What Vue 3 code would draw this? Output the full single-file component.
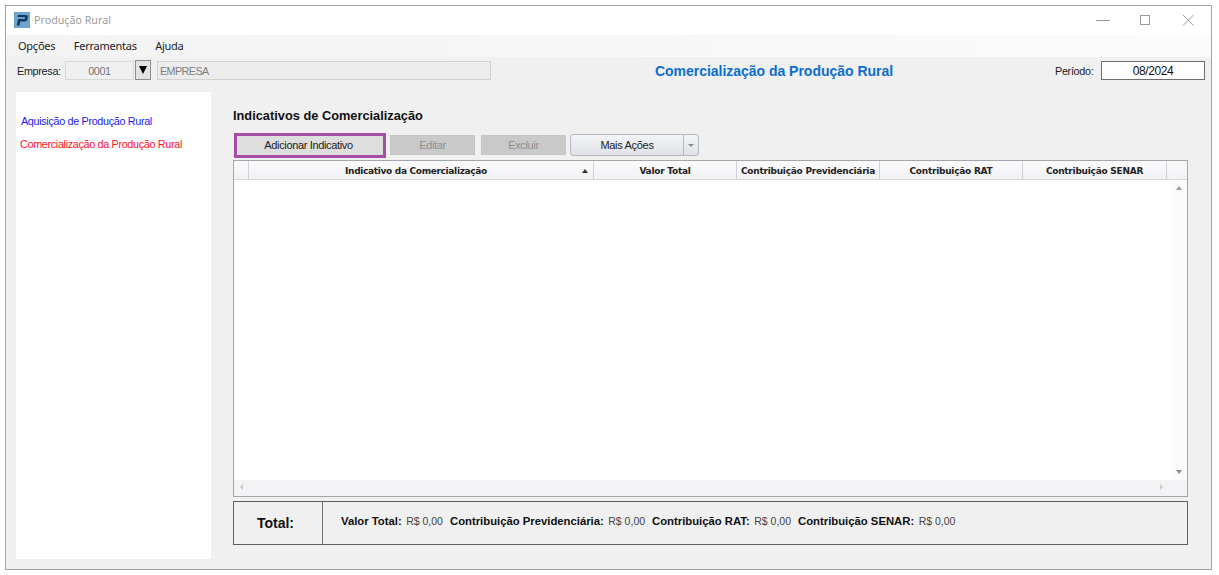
<template>
  <div class="page">
    <div class="window">
      <div class="titlebar">
        <svg class="logo" width="16" height="16" viewBox="0 0 16 16">
          <rect width="16" height="16" fill="#6ea3d0" />
          <path d="M4 3H12Q14.2 3 13.8 5.5L13.4 7.5Q13 9.6 10.6 9.6H6.2L5.5 13.5H2.8L4 7H10.3Q10.9 7 11 6.3L11.1 5.7Q11.2 5 10.6 5H3.6Z" fill="#12395c" />
        </svg>
        <span class="title">Produção Rural</span>
        <div class="winbtns">
          <svg width="14" height="14" viewBox="0 0 14 14"><path d="M0 7.5h14" stroke="#9a9a9a" fill="none" /></svg>
          <svg width="14" height="14" viewBox="0 0 14 14"><rect x="1.5" y="2.5" width="9" height="9" stroke="#9a9a9a" fill="none" /></svg>
          <svg width="14" height="14" viewBox="0 0 14 14"><path d="M1 2l10.5 10.5M11.5 2L1 12.5" stroke="#9a9a9a" fill="none" /></svg>
        </div>
      </div>
      <div class="menubar">
        <span v-for="m in menus" :key="m">{{ m }}</span>
      </div>
      <div class="infobar">
        <span class="lbl">Empresa:</span>
        <div class="code">0001</div>
        <div class="drop"><i></i></div>
        <div class="company">EMPRESA</div>
        <div class="heading">Comercialização da Produção Rural</div>
        <span class="lbl periodo">Período:</span>
        <div class="period">08/2024</div>
      </div>
      <div class="content">
        <aside class="side">
          <a class="blue">Aquisição de Produção Rural</a>
          <a class="red">Comercialização da Produção Rural</a>
        </aside>
        <main class="main">
          <h2>Indicativos de Comercialização</h2>
          <div class="toolbar">
            <button class="btn add">Adicionar Indicativo</button>
            <button class="btn off">Editar</button>
            <button class="btn off second">Excluir</button>
            <div class="split">
              <span class="split-main">Mais Ações</span>
              <span class="split-arrow"><i></i></span>
            </div>
          </div>
          <div class="grid">
            <div class="ghead">
              <div class="cell c0"></div>
              <div class="cell c1">Indicativo da Comercialização<i class="sort"></i></div>
              <div class="cell c2">Valor Total</div>
              <div class="cell c3">Contribuição Previdenciária</div>
              <div class="cell c4">Contribuição RAT</div>
              <div class="cell c5">Contribuição SENAR</div>
              <div class="cell c6"></div>
            </div>
            <div class="gbody">
              <div class="rows"></div>
              <div class="vscroll"><i class="up"></i><i class="down"></i></div>
            </div>
            <div class="hscroll"><i class="left"></i><i class="right"></i></div>
          </div>
          <div class="totals">
            <div class="total-lbl">Total:</div>
            <div class="total-vals">
              <template v-for="t in totals" :key="t">
                <b>{{ t }}:</b><span>R$ 0,00</span>
              </template>
            </div>
          </div>
        </main>
      </div>
    </div>
  </div>
</template>

<script setup>
const menus = ['Opções', 'Ferramentas', 'Ajuda']
const totals = ['Valor Total', 'Contribuição Previdenciária', 'Contribuição RAT', 'Contribuição SENAR']
</script>

<style>
html, body { margin: 0; background: #fff; }
</style>

<style scoped>
.page {
  width: 1219px;
  height: 575px;
  padding: 5px 7px 5px 5px;
  box-sizing: border-box;
  overflow: hidden;
  font-family: "Liberation Sans", Arial, sans-serif;
  font-size: 11px;
  color: #111;
}
.window {
  height: 565px;
  box-sizing: border-box;
  border: 1px solid #a3a3a3;
  background: #f0f0f0;
  display: flex;
  flex-direction: column;
}
.titlebar {
  height: 29px;
  box-sizing: border-box;
  padding: 0 0 2px 8px;
  flex: none;
  background: #fff;
  display: flex;
  align-items: center;
}
.logo { margin-right: 4px; }
.title {
  font-family: "Noto Sans", sans-serif;
  font-size: 10.7px;
  color: #9c9c9c;
}
.winbtns {
  margin-left: auto;
  display: flex;
  gap: 29px;
  padding-right: 15px;
}
.menubar {
  height: 22px;
  box-sizing: border-box;
  padding: 0 0 2px 12px;
  flex: none;
  background: linear-gradient(90deg, #f3f3f3, #fbfbfb);
  display: flex;
  align-items: center;
  gap: 18.5px;
  font-family: "Noto Sans", sans-serif;
  font-size: 11px;
  letter-spacing: -0.25px;
  color: #222;
}
.infobar {
  height: 26px;
  flex: none;
  display: flex;
  align-items: center;
  padding-left: 11px;
}
.lbl {
  width: 43px;
  flex: none;
  padding-top: 2px;
  font-size: 10.8px;
  letter-spacing: -0.3px;
  color: #222;
  white-space: nowrap;
}
.code {
  margin-left: 5px;
  width: 67px;
  height: 17px;
  border: 1px solid #d8d8d8;
  text-align: center;
  line-height: 19px;
  letter-spacing: -0.5px;
  color: #777;
}
.drop {
  margin-left: 1px;
  width: 14px;
  height: 18px;
  border: 1px solid #8d8d8d;
  background: #e3e3e3;
  display: flex;
  align-items: center;
  justify-content: center;
}
.drop i {
  border-left: 4.5px solid transparent;
  border-right: 4.5px solid transparent;
  border-top: 8px solid #000;
}
.company {
  margin-left: 6px;
  width: 330px;
  height: 17px;
  border: 1px solid #d2d2d2;
  background: #ececec;
  line-height: 19px;
  padding-left: 2px;
  font-size: 10.8px;
  letter-spacing: -0.6px;
  color: #7d7d7d;
}
.heading {
  width: 420px;
  margin-left: 73px;
  padding-top: 2px;
  text-align: center;
  font-weight: bold;
  font-size: 14px;
  letter-spacing: -0.02px;
  color: #0a6ed1;
}
.periodo { margin-left: 71px; width: 39px; }
.period {
  margin-left: 7px;
  width: 102px;
  height: 17px;
  border: 1px solid #6d6d6d;
  background: #fff;
  text-align: center;
  line-height: 19px;
  font-size: 12px;
  letter-spacing: -0.4px;
}
.content {
  flex: 1;
  min-height: 0;
  display: flex;
  padding: 9px 0 10px 10px;
}
.side {
  width: 195px;
  flex: none;
  background: #fff;
  padding-top: 22px;
  box-sizing: border-box;
  display: flex;
  flex-direction: column;
  gap: 9px;
  font-size: 10.8px;
  letter-spacing: -0.33px;
}
.side a { line-height: 14px; padding-left: 5px; }
.side .red { padding-left: 4px; color: #ff1028; }
.blue { color: #1c1cf0; }
.main {
  flex: 1;
  min-width: 0;
  padding: 0 23px 0 22px;
  display: flex;
  flex-direction: column;
}
h2 {
  margin: 15px 0 0;
  height: 17px;
  line-height: 17px;
  font-size: 12.8px;
  font-weight: bold;
  color: #111;
}
.toolbar {
  margin-top: 8px;
  height: 26px;
  display: flex;
  align-items: center;
  gap: 4px;
}
.btn {
  height: 20px;
  width: 85px;
  padding: 0;
  border: 1px solid #c6c6c6;
  background: #c9c9c9;
  font: 11px "Liberation Sans", Arial, sans-serif;
  letter-spacing: -0.35px;
  color: #8f8f8f;
}
.btn.second { margin-left: 2px; }
.btn.add {
  width: 152px;
  height: 25px;
  margin: 0 0 0 1px;
  padding-right: 3px;
  border: 3px solid #a64ea6;
  background: #dedede;
  color: #1c1c1c;
}
.split {
  width: 129px;
  height: 22px;
  box-sizing: border-box;
  border: 1px solid #b5b9c2;
  border-radius: 3px;
  background: linear-gradient(#f3f4f7, #dfe1e7);
  display: flex;
  letter-spacing: -0.3px;
  color: #222;
}
.split-main { flex: 1; text-align: center; line-height: 20px; }
.split-arrow {
  width: 14px;
  border-left: 1px solid #b5b9c2;
  display: flex;
  align-items: center;
  justify-content: center;
}
.split-arrow i {
  border-left: 3.5px solid transparent;
  border-right: 3.5px solid transparent;
  border-top: 3.5px solid #8a8a8a;
}
.grid {
  margin-top: 2px;
  height: 337px;
  box-sizing: border-box;
  border: 1px solid #a5a5ad;
  background: #fff;
  display: flex;
  flex-direction: column;
}
.ghead {
  height: 19px;
  box-sizing: border-box;
  flex: none;
  display: flex;
  border-bottom: 1px solid #d4d6dc;
  background: linear-gradient(#fafafb, #f1f2f4);
  font-family: "DejaVu Sans", sans-serif;
  font-size: 9px;
  letter-spacing: -0.25px;
  font-weight: bold;
  color: #222;
}
.cell {
  position: relative;
  box-sizing: border-box;
  border-right: 1px solid #d0d2d8;
  text-align: center;
  line-height: 20px;
  white-space: nowrap;
}
.c0 { width: 15px; }
.c1 { width: 345px; padding-right: 10px; letter-spacing: -0.32px; }
.c2 { width: 143px; }
.c3 { width: 143px; }
.c4 { width: 143px; }
.c5 { width: 144px; }
.c6 { flex: 1; border-right: 0; }
.sort {
  position: absolute;
  right: 5px;
  top: 8px;
  border-left: 3.5px solid transparent;
  border-right: 3.5px solid transparent;
  border-bottom: 4px solid #333;
}
.gbody { flex: 1; min-height: 0; display: flex; }
.rows { flex: 1; }
.vscroll {
  width: 15px;
  background: #fbfbfb;
  position: relative;
}
.hscroll {
  height: 16px;
  flex: none;
  background: #f3f3f5;
  position: relative;
}
.up, .down, .left, .right { position: absolute; display: block; }
.up {
  left: 4px;
  top: 6px;
  border-left: 3.5px solid transparent;
  border-right: 3.5px solid transparent;
  border-bottom: 4px solid #9a9a9a;
}
.down {
  left: 4px;
  bottom: 6px;
  border-left: 3.5px solid transparent;
  border-right: 3.5px solid transparent;
  border-top: 4px solid #8a8a8a;
}
.left {
  left: 6px;
  top: 4px;
  border-top: 3.5px solid transparent;
  border-bottom: 3.5px solid transparent;
  border-right: 3.5px solid #c8c8c8;
}
.right {
  right: 24px;
  top: 4px;
  border-top: 3.5px solid transparent;
  border-bottom: 3.5px solid transparent;
  border-left: 3.5px solid #c8c8c8;
}
.totals {
  margin-top: 4px;
  height: 44px;
  box-sizing: border-box;
  border: 1px solid #5e5e5e;
  display: flex;
}
.total-lbl {
  width: 89px;
  padding-right: 5px;
  box-sizing: border-box;
  flex: none;
  border-right: 1px solid #6e6e6e;
  text-align: center;
  line-height: 42px;
  font-weight: bold;
  font-size: 14px;
}
.total-vals {
  padding: 12px 0 0 18px;
  font-size: 10.5px;
  line-height: 14px;
  white-space: nowrap;
}
.total-vals b { margin-right: 4.5px; font-size: 11.3px; }
.total-vals span { margin-right: 7px; color: #444; }
</style>
